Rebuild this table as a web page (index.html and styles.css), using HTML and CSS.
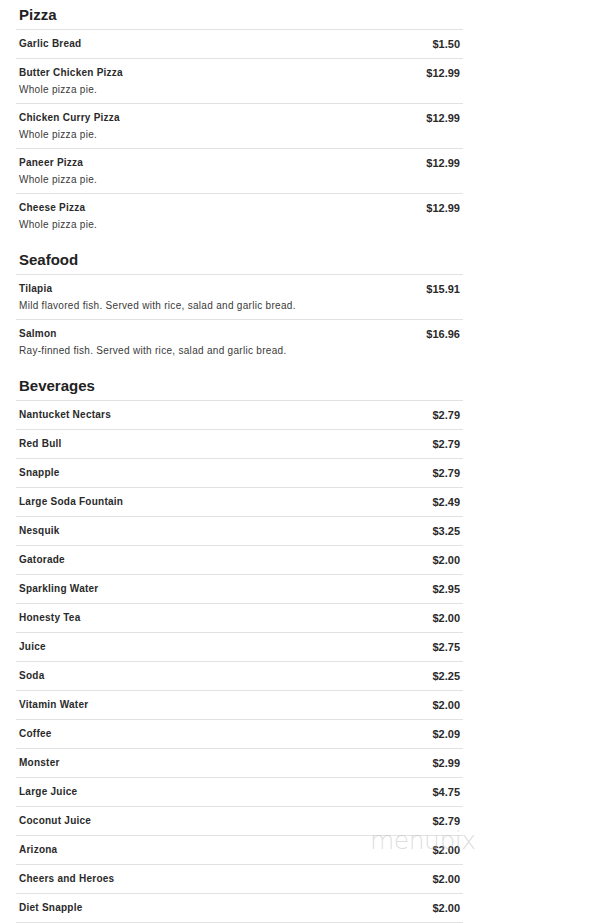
FILE: index.html
```html
<!DOCTYPE html>
<html>
<head>
<meta charset="utf-8">
<link rel="stylesheet" href="styles.css">
</head>
<body>
<div class="menu">
  <section class="section">
    <h2 class="heading">Pizza</h2>
    <div class="row"><div class="info"><div class="name">Garlic Bread</div></div><div class="price">$1.50</div></div>
    <div class="row"><div class="info"><div class="name">Butter Chicken Pizza</div><div class="desc">Whole pizza pie.</div></div><div class="price">$12.99</div></div>
    <div class="row"><div class="info"><div class="name">Chicken Curry Pizza</div><div class="desc">Whole pizza pie.</div></div><div class="price">$12.99</div></div>
    <div class="row"><div class="info"><div class="name">Paneer Pizza</div><div class="desc">Whole pizza pie.</div></div><div class="price">$12.99</div></div>
    <div class="row last"><div class="info"><div class="name">Cheese Pizza</div><div class="desc">Whole pizza pie.</div></div><div class="price">$12.99</div></div>
  </section>
  <section class="section">
    <h2 class="heading">Seafood</h2>
    <div class="row"><div class="info"><div class="name">Tilapia</div><div class="desc">Mild flavored fish. Served with rice, salad and garlic bread.</div></div><div class="price">$15.91</div></div>
    <div class="row last"><div class="info"><div class="name">Salmon</div><div class="desc">Ray-finned fish. Served with rice, salad and garlic bread.</div></div><div class="price">$16.96</div></div>
  </section>
  <section class="section">
    <h2 class="heading">Beverages</h2>
    <div class="row"><div class="info"><div class="name">Nantucket Nectars</div></div><div class="price">$2.79</div></div>
    <div class="row"><div class="info"><div class="name">Red Bull</div></div><div class="price">$2.79</div></div>
    <div class="row"><div class="info"><div class="name">Snapple</div></div><div class="price">$2.79</div></div>
    <div class="row"><div class="info"><div class="name">Large Soda Fountain</div></div><div class="price">$2.49</div></div>
    <div class="row"><div class="info"><div class="name">Nesquik</div></div><div class="price">$3.25</div></div>
    <div class="row"><div class="info"><div class="name">Gatorade</div></div><div class="price">$2.00</div></div>
    <div class="row"><div class="info"><div class="name">Sparkling Water</div></div><div class="price">$2.95</div></div>
    <div class="row"><div class="info"><div class="name">Honesty Tea</div></div><div class="price">$2.00</div></div>
    <div class="row"><div class="info"><div class="name">Juice</div></div><div class="price">$2.75</div></div>
    <div class="row"><div class="info"><div class="name">Soda</div></div><div class="price">$2.25</div></div>
    <div class="row"><div class="info"><div class="name">Vitamin Water</div></div><div class="price">$2.00</div></div>
    <div class="row"><div class="info"><div class="name">Coffee</div></div><div class="price">$2.09</div></div>
    <div class="row"><div class="info"><div class="name">Monster</div></div><div class="price">$2.99</div></div>
    <div class="row"><div class="info"><div class="name">Large Juice</div></div><div class="price">$4.75</div></div>
    <div class="row"><div class="info"><div class="name">Coconut Juice</div></div><div class="price">$2.79</div></div>
    <div class="row"><div class="info"><div class="name">Arizona</div></div><div class="price">$2.00</div></div>
    <div class="row"><div class="info"><div class="name">Cheers and Heroes</div></div><div class="price">$2.00</div></div>
    <div class="row"><div class="info"><div class="name">Diet Snapple</div></div><div class="price">$2.00</div></div>
  </section>
</div>
<div class="watermark">menupix</div>
</body>
</html>
```
FILE: styles.css
```css
html, body {
  margin: 0;
  padding: 0;
  background: #fff;
}
body {
  font-family: "Liberation Sans", Arial, sans-serif;
  color: #2a2a2a;
  height: 923px;
  overflow: hidden;
  position: relative;
}
.menu {
  width: 447px;
  margin-left: 16px;
}
.section + .section {
  margin-top: 6px;
}
.heading {
  margin: 0;
  font-size: 15px;
  line-height: 18px;
  font-weight: bold;
  padding: 6px 3px 5px 3px;
  border-bottom: 1px solid #e2e2e2;
  color: #222;
}
.row {
  display: flex;
  justify-content: space-between;
  align-items: flex-start;
  padding: 8px 3px 8px 3px;
  border-bottom: 1px solid #e2e2e2;
}
.row.last {
  border-bottom: none;
  padding-bottom: 9px;
}
.name {
  font-size: 10px;
  line-height: 12px;
  font-weight: bold;
  letter-spacing: 0.25px;
  color: #2a2a2a;
}
.desc {
  font-size: 10px;
  line-height: 11px;
  margin-top: 5px;
  color: #3a3a3a;
  letter-spacing: 0.3px;
}
.price {
  font-size: 11px;
  line-height: 12px;
  font-weight: bold;
  color: #2a2a2a;
}
.watermark {
  position: absolute;
  left: 370px;
  top: 826px;
  font-family: "DejaVu Sans", sans-serif;
  font-weight: 200;
  font-size: 25px;
  letter-spacing: -0.5px;
  color: rgba(180, 180, 180, 0.45);
}
```
